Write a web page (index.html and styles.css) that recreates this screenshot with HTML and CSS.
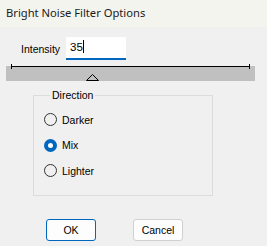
FILE: index.html
```html
<!DOCTYPE html>
<html lang="en">
<head>
    <meta charset="UTF-8">
    <meta name="viewport" content="width=device-width, initial-scale=1.0">
    <title>Bright Noise Filter Options</title>
    <link rel="stylesheet" href="styles.css">
</head>
<body>
    <div class="dialog">
        <div class="titlebar">Bright Noise Filter Options</div>

        <div class="intensity-row">
            <span class="label">Intensity</span>
            <div class="textbox">35<span class="caret"></span></div>
        </div>

        <div class="slider">
            <div class="track"></div>
            <svg class="thumb" width="13" height="7" viewBox="0 0 13 7">
                <polygon points="6.5,0.5 12.5,6.5 0.5,6.5" fill="none" stroke="#000" stroke-width="1"/>
            </svg>
        </div>

        <fieldset class="group">
            <legend>Direction</legend>
            <label class="option"><span class="radio"></span>Darker</label>
            <label class="option"><span class="radio checked"></span>Mix</label>
            <label class="option"><span class="radio"></span>Lighter</label>
        </fieldset>

        <div class="button-row">
            <button class="button default">OK</button>
            <button class="button">Cancel</button>
        </div>
    </div>
</body>
</html>
```

FILE: styles.css
```css
body {
    margin: 0;
    padding: 0;
    background: #f0f0f0;
    font-family: "Liberation Sans", Arial, sans-serif;
    font-size: 10.5px;
    color: #000;
}

.dialog {
    width: 267px;
    height: 246px;
    overflow: hidden;
}

.titlebar {
    height: 27px;
    line-height: 26px;
    padding-left: 6px;
    background: #f4f4ee;
    font-family: "Noto Sans", "Open Sans", sans-serif;
    font-size: 11.2px;
    color: #1b1b1b;
}

.intensity-row {
    display: flex;
    align-items: center;
    margin: 10px 0 0 21px;
    height: 23px;
}

.label {
    width: 45px;
}

.textbox {
    box-sizing: border-box;
    width: 60px;
    height: 23px;
    background: #fff;
    border-bottom: 2px solid #0067c0;
    padding: 3px 0 0 4px;
    font-size: 11.5px;
    line-height: 15px;
}

.caret {
    display: inline-block;
    width: 1px;
    height: 13px;
    background: #000;
    vertical-align: -2px;
}

.slider {
    position: relative;
    width: 249px;
    height: 15px;
    margin-left: 6px;
    background: #c0c0c0;
}

.track {
    margin: 6px 0 0 5px;
    width: 239px;
    height: 1px;
    background: #000;
    position: relative;
    top: 0;
}

.track::before,
.track::after {
    content: "";
    position: absolute;
    top: -2px;
    width: 1px;
    height: 5px;
    background: #000;
}

.track::before {
    left: 0;
}

.track::after {
    right: 0;
}

.thumb {
    position: absolute;
    left: 80px;
    top: 8px;
}

.group {
    box-sizing: border-box;
    width: 180px;
    margin: 8px 0 0 33px;
    padding: 5px 0 11px 10px;
    border: 1px solid #dcdcdc;
}

.group legend {
    padding: 0 2px;
    margin-left: 6px;
    line-height: 13px;
}

.option {
    display: flex;
    align-items: center;
    height: 25.5px;
}

.radio {
    box-sizing: border-box;
    width: 13px;
    height: 13px;
    border: 1px solid #333;
    border-radius: 50%;
    margin-right: 5px;
    flex: none;
}

.radio.checked {
    border: 4px solid #0067c0;
    background: #fff;
}

.button-row {
    display: flex;
    gap: 37px;
    margin: 23px 0 0 46px;
}

.button {
    box-sizing: border-box;
    width: 50px;
    height: 22px;
    background: #fdfdfd;
    border: 1px solid #d0d0d0;
    border-radius: 3px;
    font-family: "Liberation Sans", Arial, sans-serif;
    font-size: 10.5px;
    color: #000;
    padding: 0;
}

.button.default {
    border: 1px solid #0067c0;
}
```
